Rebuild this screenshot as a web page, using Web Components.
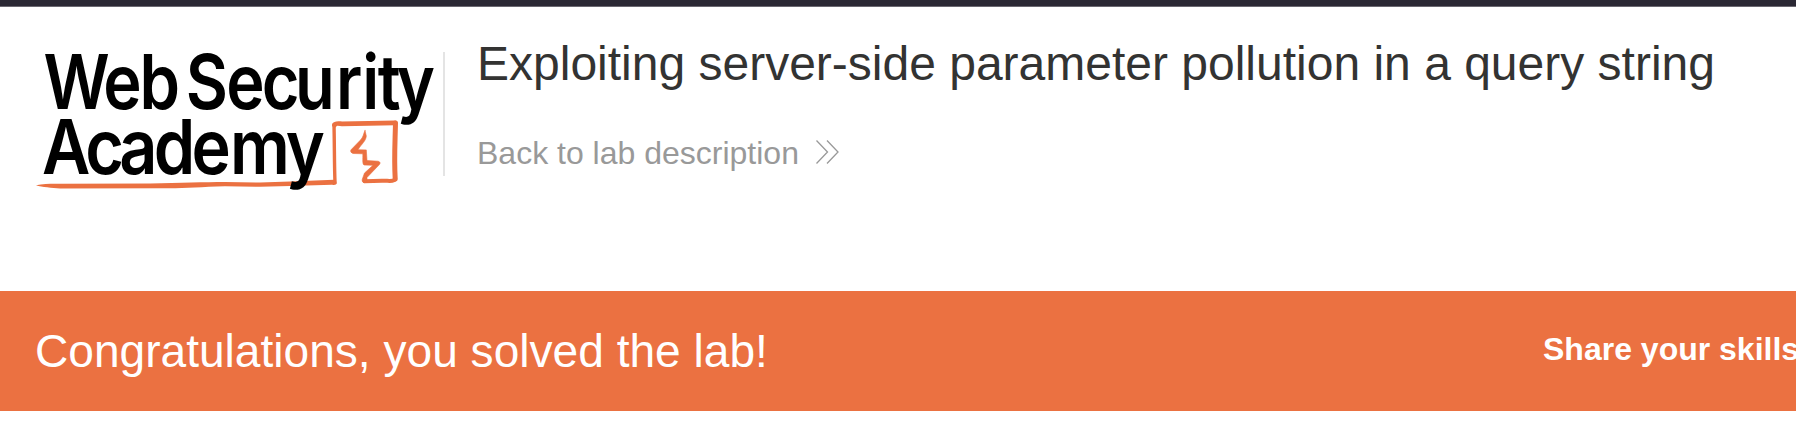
<!DOCTYPE html>
<html lang="en">
<head>
<meta charset="utf-8">
<title>Web Security Academy</title>
<style>
  html, body { margin: 0; height: 100%; overflow: hidden; background: #fff; }
  body { font-family: "Liberation Sans", Arial, sans-serif; }
</style>
</head>
<body>
<lab-page>
  <lab-header slot="header">
    <academy-logo slot="logo"></academy-logo>
    <span slot="title">Exploiting server-side parameter pollution in a query string</span>
    <back-link slot="link">Back to lab description</back-link>
  </lab-header>
  <lab-banner slot="banner">Congratulations, you solved the lab!<span slot="share">Share your skills</span></lab-banner>
</lab-page>
<script>
class Base extends HTMLElement {
  constructor() {
    super();
    this.attachShadow({ mode: 'open' }).innerHTML = this.constructor.markup;
  }
}

customElements.define('lab-page', class extends Base {
  static markup = `<style>
    :host { display: flex; flex-direction: column; height: 430px; overflow: hidden; }
    .bar { height: 6px; flex: none; background: #2b2834; border-bottom: 1px solid #6b6871; }
  </style><div class="bar"></div><slot name="header"></slot><slot name="banner"></slot>`;
});

customElements.define('lab-header', class extends Base {
  static markup = `<style>
    :host { display: flex; height: 284px; flex: none; box-sizing: border-box; padding: 29px 0 0 30px; }
    .rule { width: 2px; height: 124px; margin: 16px 32px 0 13px; background: #e4e4e4; flex: none; }
    .text { display: flex; flex-direction: column; white-space: nowrap; }
    h2 { margin: 0; font-size: 48px; line-height: 56px; font-weight: 400; color: #333332; }
    .link { margin-top: 43px; }
  </style><slot name="logo"></slot><div class="rule"></div>
  <div class="text"><h2><slot name="title"></slot></h2><div class="link"><slot name="link"></slot></div></div>`;
});

customElements.define('back-link', class extends Base {
  static markup = `<style>
    :host { display: flex; color: #999; font-size: 32px; line-height: 37px; }
    svg { margin: 3px 0 0 14px; }
  </style><slot></slot><svg width="28" height="28" viewBox="0 0 28 28" fill="none" stroke="#999" stroke-width="1.3"><path d="M3.5 2.5 14.5 14 3.5 25.5M14 2.5 25 14 14 25.5"/></svg>`;
});

customElements.define('lab-banner', class extends Base {
  static markup = `<style>
    :host { display: flex; height: 120px; flex: none; box-sizing: border-box; background: #eb7141; color: #fff;
      padding-left: 35px; white-space: nowrap; overflow: hidden; }
    .msg { font-size: 46.1px; line-height: 53px; padding-top: 34px; width: 1508px; flex: none; }
    .share { font-size: 32px; line-height: 37px; font-weight: 700; padding-top: 40px; flex: none; }
  </style><div class="msg"><slot></slot></div><div class="share"><slot name="share"></slot></div>`;
});

customElements.define('academy-logo', class extends Base {
  static markup = `<style>
    :host { display: block; width: 400px; height: 160px; flex: none; }
    svg { display: block; overflow: visible; }
    text { font-family: Inter, sans-serif; font-weight: 570; font-size: 75.5px; fill: #000; font-variation-settings: "opsz" 14; font-kerning: none; }
  </style>
  <svg width="400" height="160" viewBox="30 36 400 160">
    <g fill="none" stroke="#eb7141" stroke-linejoin="round" stroke-linecap="round">
      <path fill="#eb7141" stroke="none" d="M36 185.3C44 183.7 52 183.5 60 183.7L150 183.4C180 183 205 182 225 182L260 182.6L290 181.6L334 179.8Q337 180.3 336.5 184Q335 185.2 332 184.8L290 185.9L260 186.8L225 186.3C200 187 185 188.5 165 188.3L60 188.5C52 187.8 42 187.3 36 185.3Z"/>
      <path stroke-width="3.4" d="M335 182.5C334.3 165 334.5 145 334 124.5"/>
      <path stroke-width="4.8" d="M334.5 125C335.5 122.8 338 123.5 342 123.8L395 122.8"/>
      <path stroke-width="5" d="M395.5 123C395 145 394 158 395.2 179"/>
      <path stroke-width="4" d="M395.2 179C394 182 388 180.5 382 180.8L364.5 181.3"/>
      <path fill="#eb7141" stroke-width=".6" d="M365 130.5L366.3 136C366 141 361.5 144 358 149.7L366.3 149.9L367 160.5L378 161.2C381 162 380.5 164 378 166L367 177.5L367 182.3Q361.5 183.5 362.2 179.5L364.5 173L373 165.3L364 165C362.2 164 363 159 362.8 153.8L353 153.5Q350 152.5 350.8 150L360 140.5C363.7 137 363.5 133 365 130.5Z"/>
    </g>
    <g transform="scale(.86 1)"><text data-word="web" y="109.3">Web</text><text data-word="security" y="109.3">Security</text></g>
    <g transform="scale(.88 1)"><text data-word="academy" y="174">Academy</text></g>
  </svg>`;

  /* Horizontal centre of the ink of every letter of the wordmark. */
  static centres = {
    web: [.86, 76.4, 122.5, 160.8],
    security: [.86, 206.5, 245.5, 280.5, 314.8, 350.8, 371, 389, 416],
    academy: [.88, 66.4, 104.5, 137.3, 173.6, 211.2, 260.2, 305.5]
  };

  connectedCallback() {
    const ctx = document.createElement('canvas').getContext('2d');
    ctx.font = '570 755px Inter';
    for (const [word, [scale, ...centres]] of Object.entries(this.constructor.centres)) {
      const text = this.shadowRoot.querySelector(`[data-word=${word}]`);
      text.setAttribute('x', centres.map((centre, i) => {
        const m = ctx.measureText(text.textContent[i]);
        return (centre / scale - (m.actualBoundingBoxRight - m.actualBoundingBoxLeft) / 20).toFixed(2);
      }).join(' '));
    }
  }
});
</script>
</body>
</html>
